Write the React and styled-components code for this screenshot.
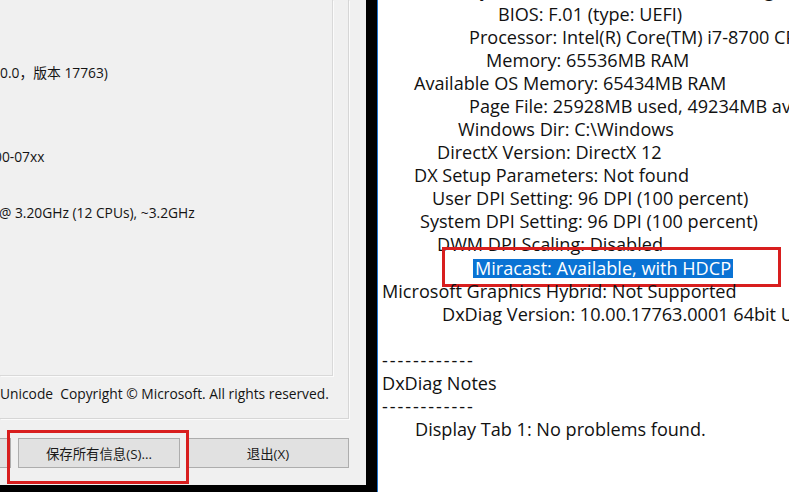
import React from 'react';
import styled, { createGlobalStyle } from 'styled-components';

const GlobalStyle = createGlobalStyle`
  html, body {
    margin: 0;
    padding: 0;
    background: #000;
    overflow: hidden;
  }
`;

const infoRows = [
  { text: '' },
  { text: '' },
  { text: '0.0，版本 17763)' },
  { text: '' },
  { text: '' },
  { text: '00-07xx', shift: -6 },
  { text: '' },
  { text: '@ 3.20GHz (12 CPUs), ~3.2GHz', shift: -1 },
  { text: '' },
  { text: '' },
  { text: '' },
];

const noteLines = [
  { text: 'System Model: Z370 AORUS Gaming 7', indent: 88 },
  { text: 'BIOS: F.01 (type: UEFI)', indent: 116 },
  { text: 'Processor: Intel(R) Core(TM) i7-8700 CPU @ 3.20GHz (12 CPUs), ~3.2GHz', indent: 87 },
  { text: 'Memory: 65536MB RAM', indent: 104 },
  { text: 'Available OS Memory: 65434MB RAM', indent: 32 },
  { text: 'Page File: 25928MB used, 49234MB available', indent: 87 },
  { text: 'Windows Dir: C:\\Windows', indent: 76 },
  { text: 'DirectX Version: DirectX 12', indent: 55 },
  { text: 'DX Setup Parameters: Not found', indent: 32 },
  { text: 'User DPI Setting: 96 DPI (100 percent)', indent: 50 },
  { text: 'System DPI Setting: 96 DPI (100 percent)', indent: 38 },
  { text: 'DWM DPI Scaling: Disabled', indent: 55 },
  { text: 'Miracast: Available, with HDCP', indent: 91, selected: true },
  { text: 'Microsoft Graphics Hybrid: Not Supported', indent: 0 },
  { text: 'DxDiag Version: 10.00.17763.0001 64bit Unicode', indent: 60 },
  { text: '', indent: 0 },
  { text: '------------', indent: 0, rule: true },
  { text: 'DxDiag Notes', indent: 0 },
  { text: '------------', indent: 0, rule: true },
  { text: 'Display Tab 1: No problems found.', indent: 33 },
  { text: '', indent: 0 },
];

const App = () => {
  return (
    <Screen>
      <GlobalStyle />
      <Dialog>
        <TabPage>
          <InfoBox>
            {infoRows.map((row, i) => (
              <InfoRow key={i} $shift={row.shift || 0}>{row.text}</InfoRow>
            ))}
          </InfoBox>
          <Copyright>Unicode&nbsp;&nbsp;Copyright © Microsoft. All rights reserved.</Copyright>
        </TabPage>
        <ButtonRow>
          <Button>下一页(N)</Button>
          <Marked>
            <Button>保存所有信息(S)...</Button>
          </Marked>
          <Button>退出(X)</Button>
        </ButtonRow>
      </Dialog>
      <Notepad>
        <NoteText>
          {noteLines.map((line, i) => (
            <NoteLine key={i} $indent={line.indent} $rule={line.rule}>
              {line.selected ? (
                <>
                  <Selected>{line.text}</Selected>
                  <Callout />
                </>
              ) : line.text}
            </NoteLine>
          ))}
        </NoteText>
      </Notepad>
    </Screen>
  );
};

const Screen = styled.div`
  display: flex;
  width: 789px;
  height: 492px;
  background: #000;
  overflow: hidden;
`;

const Dialog = styled.div`
  flex: none;
  width: 366px;
  height: 485px;
  background: #f0f0f0;
  display: flex;
  flex-direction: column;
  overflow: hidden;
  font-family: "Open Sans", "Noto Sans CJK SC", sans-serif;
  font-size: 13.8px;
  color: #141414;
`;

const TabPage = styled.div`
  flex: none;
  width: 348px;
  height: 418px;
  border-right: 1px solid #d6d6d6;
  border-bottom: 1px solid #d6d6d6;
  box-shadow: 1px 1px 0 #fbfbfb;
  display: flex;
  flex-direction: column;
`;

const InfoBox = styled.div`
  flex: none;
  width: 332px;
  height: 372px;
  padding-top: 3px;
  border-right: 1px solid #d9d9d9;
  border-bottom: 1px solid #d9d9d9;
  box-shadow: 1px 1px 0 #fbfbfb;
  overflow: hidden;
`;

const InfoRow = styled.div`
  height: 28px;
  line-height: 28px;
  white-space: pre;
  margin-left: ${p => p.$shift}px;
`;

const Copyright = styled.div`
  padding-top: 9px;
  line-height: 17px;
  white-space: pre;
`;

const ButtonRow = styled.div`
  display: flex;
  justify-content: flex-end;
  gap: 7px;
  width: 349px;
  margin-top: 19px;
`;

const Button = styled.div`
  flex: none;
  box-sizing: border-box;
  width: 162px;
  height: 30px;
  display: flex;
  align-items: center;
  justify-content: center;
  background: #e1e1e1;
  border: 1px solid #adadad;
  font-size: 13.4px;
  color: #1a1a1a;
`;

const Marked = styled.div`
  position: relative;
  flex: none;

  &::after {
    content: '';
    position: absolute;
    top: -8px;
    left: -11px;
    right: -9px;
    bottom: -16px;
    border: 3px solid #d81e1e;
  }
`;

const Notepad = styled.div`
  flex: 1;
  margin-left: 11px;
  height: 492px;
  background: #fff;
  border-left: 1px solid #1f74d0;
  overflow: hidden;
  font-family: "Open Sans", "Noto Sans", sans-serif;
  font-size: 18.1px;
  color: #111;
`;

const NoteText = styled.div`
  margin-top: -20.6px;
  padding-left: 4px;
`;

const NoteLine = styled.div`
  position: relative;
  height: 23.1px;
  line-height: 23.1px;
  white-space: pre;
  padding-left: ${p => p.$indent}px;
  letter-spacing: ${p => (p.$rule ? '1.9px' : 'normal')};
`;

const Selected = styled.span`
  display: inline-block;
  height: 19px;
  line-height: 19px;
  padding: 0 2px;
  background: #0a73d4;
  color: #fff;
  vertical-align: top;
  margin-top: 2px;
`;

const Callout = styled.span`
  position: absolute;
  top: -10px;
  left: 60px;
  width: 339px;
  height: 40px;
  box-sizing: border-box;
  border: 3px solid #d81e1e;
`;

export default App;
